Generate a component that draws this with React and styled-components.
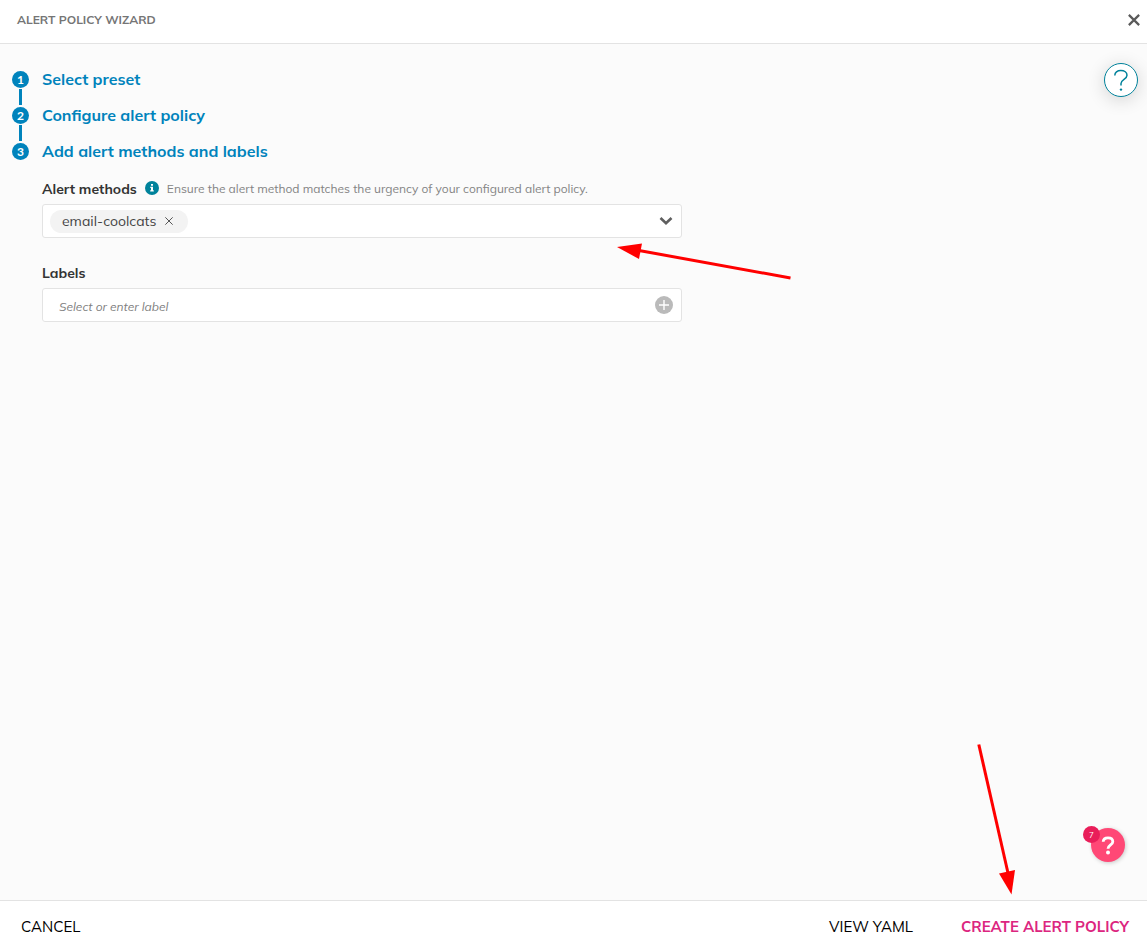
import React, { useState } from "react";
import styled, { createGlobalStyle } from "styled-components";

const GlobalStyle = createGlobalStyle`
  *, *::before, *::after {
    box-sizing: border-box;
  }
  body {
    margin: 0;
    font-family: Mulish, "Open Sans", "Noto Sans", sans-serif;
    color: #333333;
    background-color: #fbfbfb;
  }
  button, input, select {
    font-family: inherit;
  }
`;

const PageStyle = styled.div`
  display: flex;
  flex-direction: column;
  min-height: 100vh;
`;

const HeaderStyle = styled.header`
  display: flex;
  align-items: center;
  justify-content: space-between;
  padding: 11px 6px 14px 17px;
  background-color: #ffffff;
  border-bottom: 1px solid #e3e3e3;
`;

const TitleStyle = styled.h1`
  margin: 0;
  font-size: 12px;
  line-height: 18px;
  font-weight: 700;
  color: #757575;
`;

const IconButtonStyle = styled.button`
  display: flex;
  flex-shrink: 0;
  padding: 0;
  border: none;
  background: none;
  cursor: pointer;
`;

const MainStyle = styled.main`
  position: relative;
  flex: 1;
  padding: 27px 12px;
`;

const StepsStyle = styled.ol`
  margin: 0;
  padding: 0;
  list-style: none;
`;

const StepStyle = styled.li`
  display: flex;
  gap: 13px;
`;

const MarkerStyle = styled.div`
  display: flex;
  flex-direction: column;
  align-items: center;
  flex-shrink: 0;
`;

const NumberStyle = styled.span`
  width: 17px;
  height: 17px;
  border-radius: 50%;
  background-color: #0083bc;
  color: #ffffff;
  font-family: Lato, sans-serif;
  font-size: 12px;
  line-height: 17px;
  font-weight: 700;
  text-align: center;
`;

const ConnectorStyle = styled.span`
  width: 3px;
  height: 16px;
  margin: 1px 0 2px;
  background-color: #0083bc;
`;

const StepBodyStyle = styled.div`
  flex: 1;
  min-width: 0;
`;

const StepTitleStyle = styled.h2`
  margin: 0;
  font-size: 16px;
  line-height: 17px;
  font-weight: 700;
  color: #0083bc;
`;

const FormStyle = styled.form`
  display: flex;
  flex-direction: column;
  gap: 24px;
  max-width: 640px;
  padding-top: 18px;
`;

const FieldStyle = styled.div`
  position: relative;
`;

const LabelRowStyle = styled.div`
  display: flex;
  align-items: center;
  gap: 8px;
  margin-bottom: 4px;
  line-height: 22px;

  svg {
    margin-bottom: 2px;
  }
`;

const LabelStyle = styled.label`
  font-size: 14px;
  font-weight: 700;
`;

const HintStyle = styled.span`
  font-size: 12px;
  color: #848484;
`;

const ControlStyle = styled.div`
  position: relative;
  display: flex;
  align-items: center;
  height: 34px;
  padding: 0 8px 0 7px;
  border: 1px solid #e3e3e3;
  border-radius: 3px;
  background-color: #ffffff;
`;

const ChipStyle = styled.span`
  display: flex;
  align-items: center;
  gap: 8px;
  height: 23px;
  padding: 0 14px 0 12px;
  border-radius: 12px;
  background-color: #f3f3f3;
  color: #444444;
  font-size: 14px;
  line-height: 25px;
`;

const SelectStyle = styled.select`
  flex: 1;
  height: 100%;
  border: none;
  outline: none;
  appearance: none;
  background: none;
  font-size: 14px;
  cursor: pointer;
`;

const ChevronStyle = styled.svg`
  position: absolute;
  right: 8px;
  pointer-events: none;
`;

const InputStyle = styled.input`
  flex: 1;
  min-width: 0;
  height: 100%;
  padding: 2px 9px 0;
  border: none;
  outline: none;
  background: none;
  font-size: 12px;

  &::placeholder {
    color: #808080;
    font-style: italic;
    opacity: 1;
  }
`;

const HelpButtonStyle = styled.button`
  position: absolute;
  top: 19px;
  right: 9px;
  width: 34px;
  height: 34px;
  padding: 0;
  border: 1px solid #00829b;
  border-radius: 50%;
  background-color: #ffffff;
  box-shadow: 0 3px 18px rgba(0, 0, 0, 0.16);
  cursor: pointer;

  svg {
    display: block;
  }
`;

const ChatButtonStyle = styled.button`
  position: absolute;
  right: 22px;
  bottom: 38px;
  width: 34px;
  height: 34px;
  padding: 0;
  border: none;
  border-radius: 50%;
  background-color: #ff4876;
  box-shadow: 1px 1px 4px rgba(0, 0, 0, 0.2);
  cursor: pointer;

  svg {
    display: block;
  }
`;

const BadgeStyle = styled.span`
  position: absolute;
  top: -2px;
  left: -8px;
  width: 17px;
  height: 17px;
  border-radius: 50%;
  background-color: #e91e5a;
  color: #ffffff;
  font-size: 8px;
  line-height: 19px;
  text-align: center;
`;

const FooterStyle = styled.footer`
  display: flex;
  align-items: center;
  gap: 48px;
  padding: 14px 18px 9px 21px;
  border-top: 1px solid #e3e3e3;
  background-color: #ffffff;
`;

const ActionStyle = styled.button`
  padding: 0;
  border: none;
  background: none;
  font-size: 15px;
  line-height: 24px;
  font-weight: ${({ $primary }) => ($primary ? 700 : 400)};
  color: ${({ $primary }) => ($primary ? "#dc267f" : "#000000")};
  margin-right: ${({ $push }) => ($push ? "auto" : "0")};
  cursor: pointer;
`;

const FieldArrowStyle = styled.svg`
  position: absolute;
  left: 575px;
  top: 62px;
  pointer-events: none;
`;

const FooterArrowStyle = styled.svg`
  position: absolute;
  right: 132px;
  bottom: 5px;
  pointer-events: none;
`;

function CloseIcon({ size, color, width }) {
  return (
    <svg width={size} height={size} viewBox="0 0 12 12" fill="none" stroke={color} strokeWidth={width}>
      <path d="M1.6 1.6L10.4 10.4M10.4 1.6L1.6 10.4" />
    </svg>
  );
}

function InfoIcon() {
  return (
    <svg width="14" height="14" viewBox="0 0 14 14" aria-hidden="true">
      <circle cx="7" cy="7" r="7" fill="#00829b" />
      <path d="M6 3h2v1.8H6zM5.3 5.8H8v3.5h.8v1.2H5.2V9.3H6V7h-.7z" fill="#ffffff" />
    </svg>
  );
}

function PlusIcon() {
  return (
    <svg width="18" height="18" viewBox="0 0 18 18">
      <circle cx="9" cy="9" r="9" fill="#bababa" />
      <path d="M9 4v10M4 9h10" stroke="#ffffff" strokeWidth="1.4" />
    </svg>
  );
}

function Step({ number, title, last, children }) {
  return (
    <StepStyle>
      <MarkerStyle>
        <NumberStyle>{number}</NumberStyle>
        {!last && <ConnectorStyle />}
      </MarkerStyle>
      <StepBodyStyle>
        <StepTitleStyle>{title}</StepTitleStyle>
        {children}
      </StepBodyStyle>
    </StepStyle>
  );
}

export default function App() {
  const [methods, setMethods] = useState(["email-coolcats"]);
  const [label, setLabel] = useState("");

  const removeMethod = (name) => setMethods(methods.filter((m) => m !== name));

  const addMethod = (e) => {
    if (e.target.value && !methods.includes(e.target.value)) {
      setMethods([...methods, e.target.value]);
    }
  };

  return (
    <>
      <GlobalStyle />
      <PageStyle>
        <HeaderStyle>
          <TitleStyle>ALERT POLICY WIZARD</TitleStyle>
          <IconButtonStyle type="button" aria-label="Close">
            <CloseIcon size={14} color="#5a5a5a" width={1.9} />
          </IconButtonStyle>
        </HeaderStyle>

        <MainStyle>
          <StepsStyle>
            <Step number={1} title="Select preset" />
            <Step number={2} title="Configure alert policy" />
            <Step number={3} title="Add alert methods and labels" last>
              <FormStyle onSubmit={(e) => e.preventDefault()}>
                <FieldStyle>
                  <LabelRowStyle>
                    <LabelStyle htmlFor="methods">Alert methods</LabelStyle>
                    <InfoIcon />
                    <HintStyle>
                      Ensure the alert method matches the urgency of your configured alert policy.
                    </HintStyle>
                  </LabelRowStyle>
                  <ControlStyle>
                    {methods.map((name) => (
                      <ChipStyle key={name}>
                        {name}
                        <IconButtonStyle type="button" aria-label={`Remove ${name}`} onClick={() => removeMethod(name)}>
                          <CloseIcon size={10} color="#555555" width={1.2} />
                        </IconButtonStyle>
                      </ChipStyle>
                    ))}
                    <SelectStyle id="methods" value="" onChange={addMethod}>
                      <option value=""></option>
                      <option value="email-coolcats">email-coolcats</option>
                    </SelectStyle>
                    <ChevronStyle width="14" height="10" viewBox="0 0 14 10" fill="none">
                      <path d="M1.5 2L7 7.3L12.5 2" stroke="#5f5f5f" strokeWidth="2.6" />
                    </ChevronStyle>
                  </ControlStyle>
                  <FieldArrowStyle width="176" height="42" viewBox="0 0 176 42">
                    <path d="M22 10.5L173.5 38" stroke="#ff0000" strokeWidth="3" />
                    <path d="M0 7L25 3.5L22 19z" fill="#ff0000" />
                  </FieldArrowStyle>
                </FieldStyle>

                <FieldStyle>
                  <LabelRowStyle>
                    <LabelStyle htmlFor="labels">Labels</LabelStyle>
                  </LabelRowStyle>
                  <ControlStyle>
                    <InputStyle
                      id="labels"
                      type="text"
                      placeholder="Select or enter label"
                      value={label}
                      onChange={(e) => setLabel(e.target.value)}
                    />
                    <IconButtonStyle type="button" aria-label="Add label">
                      <PlusIcon />
                    </IconButtonStyle>
                  </ControlStyle>
                </FieldStyle>
              </FormStyle>
            </Step>
          </StepsStyle>

          <HelpButtonStyle type="button" aria-label="Help">
            <svg width="32" height="32" viewBox="0 0 32 32" fill="none">
              <path
                d="M9.8 11.5C9.8 8.4 12.3 6.6 15.8 6.6C19.5 6.6 22 8.6 22 11.3C22 15.4 16 15.4 16 19.6V21.6"
                stroke="#00829b"
                strokeWidth="1.5"
              />
              <circle cx="16" cy="25.6" r="1.2" fill="#00829b" />
            </svg>
          </HelpButtonStyle>

          <FooterArrowStyle width="45" height="152" viewBox="0 0 45 152">
            <path d="M8.8 1.5L38 130" stroke="#ff0000" strokeWidth="3" />
            <path d="M29 130.5L45 127L41.5 151.5z" fill="#ff0000" />
          </FooterArrowStyle>

          <ChatButtonStyle type="button" aria-label="Open guide center, 7 new">
            <svg width="34" height="34" viewBox="0 0 34 34" fill="none">
              <path
                d="M12.2 13.8C12.3 11.3 14.2 9.9 17 9.9C19.9 9.9 21.8 11.4 21.8 13.7C21.8 16.9 17 17.1 17 20.8"
                stroke="#ffffff"
                strokeWidth="2.8"
              />
              <circle cx="17" cy="24.6" r="2" fill="#ffffff" />
            </svg>
            <BadgeStyle>7</BadgeStyle>
          </ChatButtonStyle>
        </MainStyle>

        <FooterStyle>
          <ActionStyle type="button" $push>CANCEL</ActionStyle>
          <ActionStyle type="button">VIEW YAML</ActionStyle>
          <ActionStyle type="button" $primary>CREATE ALERT POLICY</ActionStyle>
        </FooterStyle>
      </PageStyle>
    </>
  );
}
